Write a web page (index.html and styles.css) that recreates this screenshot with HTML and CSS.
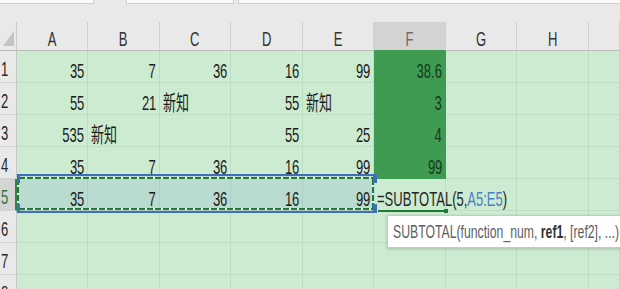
FILE: index.html
```html
<!DOCTYPE html>
<html>
<head>
<meta charset="utf-8">
<link rel="stylesheet" href="styles.css">
</head>
<body>
<div class="top">
  <div class="box b1"></div>
  <div class="box b2"></div>
  <div class="box b3"></div>
</div>
<div class="sheet">
  <div class="corner"><svg width="12" height="16" viewBox="0 0 12 16"><polygon points="11,0 11,15 0,15" fill="#c4c4c4"/></svg></div>
  <div class="ch"><span class="t">A</span></div>
  <div class="ch"><span class="t">B</span></div>
  <div class="ch"><span class="t">C</span></div>
  <div class="ch"><span class="t">D</span></div>
  <div class="ch"><span class="t">E</span></div>
  <div class="ch ch-on"><span class="t">F</span></div>
  <div class="ch"><span class="t">G</span></div>
  <div class="ch"><span class="t">H</span></div>
  <div class="ch"></div>

  <div class="rh"><span class="t">1</span></div>
  <div class="c r"><span class="t">35</span></div>
  <div class="c r"><span class="t">7</span></div>
  <div class="c r"><span class="t">36</span></div>
  <div class="c r"><span class="t">16</span></div>
  <div class="c r"><span class="t">99</span></div>
  <div class="c r f"><span class="t">38.6</span></div>
  <div class="c"></div><div class="c"></div><div class="c"></div>

  <div class="rh"><span class="t">2</span></div>
  <div class="c r"><span class="t">55</span></div>
  <div class="c r"><span class="t">21</span></div>
  <div class="c l"><span class="t">新知</span></div>
  <div class="c r"><span class="t">55</span></div>
  <div class="c l"><span class="t">新知</span></div>
  <div class="c r f"><span class="t">3</span></div>
  <div class="c"></div><div class="c"></div><div class="c"></div>

  <div class="rh"><span class="t">3</span></div>
  <div class="c r"><span class="t">535</span></div>
  <div class="c l"><span class="t">新知</span></div>
  <div class="c"></div>
  <div class="c r"><span class="t">55</span></div>
  <div class="c r"><span class="t">25</span></div>
  <div class="c r f"><span class="t">4</span></div>
  <div class="c"></div><div class="c"></div><div class="c"></div>

  <div class="rh"><span class="t">4</span></div>
  <div class="c r"><span class="t">35</span></div>
  <div class="c r"><span class="t">7</span></div>
  <div class="c r"><span class="t">36</span></div>
  <div class="c r"><span class="t">16</span></div>
  <div class="c r"><span class="t">99</span></div>
  <div class="c r f"><span class="t">99</span></div>
  <div class="c"></div><div class="c"></div><div class="c"></div>

  <div class="rh rh-on"><span class="t">5</span></div>
  <div class="c r"><span class="t">35</span></div>
  <div class="c r"><span class="t">7</span></div>
  <div class="c r"><span class="t">36</span></div>
  <div class="c r"><span class="t">16</span></div>
  <div class="c r"><span class="t">99</span></div>
  <div class="c l edit"><span class="t">=SUBTOTAL(5,<span class="ref">A5:E5</span>)</span></div>
  <div class="c"></div><div class="c"></div><div class="c"></div>

  <div class="rh"><span class="t">6</span></div>
  <div class="c"></div><div class="c"></div><div class="c"></div><div class="c"></div><div class="c"></div><div class="c"></div><div class="c"></div><div class="c"></div><div class="c"></div>

  <div class="rh"><span class="t">7</span></div>
  <div class="c"></div><div class="c"></div><div class="c"></div><div class="c"></div><div class="c"></div><div class="c"></div><div class="c"></div><div class="c"></div><div class="c"></div>

  <div class="rh"><span class="t">8</span></div>
  <div class="c"></div><div class="c"></div><div class="c"></div><div class="c"></div><div class="c"></div><div class="c"></div><div class="c"></div><div class="c"></div><div class="c"></div>

  <div class="sel">
    <div class="ants ants-top"></div>
    <div class="ants ants-bot"></div>
    <div class="ants-v ants-left"></div>
    <div class="ants-v ants-right"></div>
    <div class="hdl hdl-tl"></div>
    <div class="hdl hdl-bl"></div>
    <div class="hdl hdl-tr"></div>
    <div class="hdl hdl-br"></div>
  </div>
  <div class="active-line"><div class="sq"></div></div>
  <div class="tip"><span class="t">SUBTOTAL(function_num, <b>ref1</b>, [ref2], ...)</span></div>
</div>
</body>
</html>
```

FILE: styles.css
```css
html, body {
  margin: 0;
  padding: 0;
  width: 620px;
  height: 289px;
  overflow: hidden;
  background: #e9e9e9;
  font-family: "Liberation Sans", "Noto Sans CJK SC", sans-serif;
}

.top {
  height: 22px;
  display: flex;
  align-items: flex-start;
  background: #e9e9e9;
}
.box {
  height: 3px;
  background: #fbfbfb;
  border-bottom: 1px solid #cfcfcf;
}
.b1 { width: 93px; border-right: 1px solid #cfcfcf; }
.b2 { width: 106px; margin-left: 32px; border-left: 1px solid #cfcfcf; border-right: 1px solid #cfcfcf; }
.b3 { flex: 1; margin-left: 4px; border-left: 1px solid #cfcfcf; }

.sheet {
  position: relative;
  display: grid;
  grid-template-columns: 17px 71px 72px 71px 72px 71px 72px 71px 72px 1fr;
  grid-template-rows: 29px repeat(8, 32px);
  background: #cdebd1;
}

.t {
  position: relative;
  z-index: 1;
  display: inline-block;
  white-space: nowrap;
  font-size: 21px;
  line-height: 21px;
  transform: scaleX(0.62);
}

.corner {
  background: #e9e9e9;
  border-right: 1px solid #c9c9c9;
  border-bottom: 1px solid #b9b9b9;
  display: flex;
  align-items: flex-end;
  padding: 0 0 3px 3px;
}

.ch {
  background: #e9e9e9;
  border-right: 1px solid #d0d0d0;
  border-bottom: 1px solid #b9b9b9;
  display: flex;
  align-items: flex-end;
  justify-content: center;
  padding-bottom: 1px;
  color: #333333;
}
.ch-on {
  background: #d3d3d3;
  color: #6a6a6a;
  border-bottom-color: #3f9b52;
}

.rh {
  background: #e9e9e9;
  border-right: 1px solid #c5c5c5;
  border-bottom: 1px solid #d2d2d2;
  display: flex;
  align-items: flex-end;
  padding: 0 0 3px 1px;
  color: #262626;
}
.rh .t { transform-origin: left center; }
.rh-on {
  background: #d4d4d4;
  color: #2a7a40;
  border-right: 2px solid #2a8a44;
}

.c {
  border-right: 1px solid #bddcc1;
  border-bottom: 1px solid #bddcc1;
  display: flex;
  align-items: flex-end;
  padding-bottom: 1px;
  color: #1c1c1c;
  min-width: 0;
}
.c.r { justify-content: flex-end; padding-right: 3px; }
.c.r .t { transform-origin: right center; }
.c.l { justify-content: flex-start; padding-left: 3px; }
.c.l .t { transform-origin: left center; }
.c.f {
  background: #3f9b52;
  border-right-color: #3f9b52;
  border-bottom-color: #3f9b52;
  color: #143a1d;
}
.edit { color: #262626; padding-left: 4px; }
.ref { color: #4a80c6; }

.sel {
  position: absolute;
  z-index: 0;
  left: 17px;
  top: 152px;
  width: 358px;
  height: 39px;
  box-sizing: border-box;
  border-top: 2px solid #3e6fb8;
  border-bottom: 2px solid #3e6fb8;
  background: rgba(150, 190, 205, 0.35);
}
.ants {
  position: absolute;
  left: 2px;
  right: 2px;
  height: 2px;
  background: repeating-linear-gradient(90deg, #1f7a3a 0 6px, #eef6ef 6px 8px);
}
.ants-top { top: 1px; }
.ants-bot { bottom: 1px; }
.ants-v {
  position: absolute;
  top: 3px;
  bottom: 3px;
  width: 2px;
  background: repeating-linear-gradient(180deg, #1f7a3a 0 6px, #eef6ef 6px 8px);
}
.ants-left { left: 0; }
.ants-right { right: 1px; }
.hdl {
  position: absolute;
  width: 3px;
  height: 9px;
  background: #3e6fb8;
}
.hdl-tl { left: 0; top: -2px; }
.hdl-bl { left: 0; bottom: -2px; }
.hdl-tr { right: -2px; top: -2px; width: 4px; }
.hdl-br { right: -2px; bottom: -2px; width: 4px; }

.active-line {
  position: absolute;
  z-index: 0;
  left: 378px;
  top: 188px;
  width: 67px;
  height: 2px;
  background: #1f7a3a;
}
.sq {
  position: absolute;
  right: -3px;
  top: -1px;
  width: 4px;
  height: 4px;
  background: #1f7a3a;
}

.tip {
  position: absolute;
  z-index: 2;
  left: 387px;
  top: 193px;
  width: 250px;
  height: 33px;
  box-sizing: border-box;
  background: #ffffff;
  border: 1px solid #c8c8c8;
  box-shadow: 0 1px 3px rgba(0, 0, 0, 0.2);
  display: flex;
  align-items: center;
  padding-left: 5px;
  color: #5e5e5e;
}
.tip .t {
  font-size: 18px;
  line-height: 20px;
  transform: scaleX(0.68);
  transform-origin: left center;
}
.tip b { color: #333333; }
```
